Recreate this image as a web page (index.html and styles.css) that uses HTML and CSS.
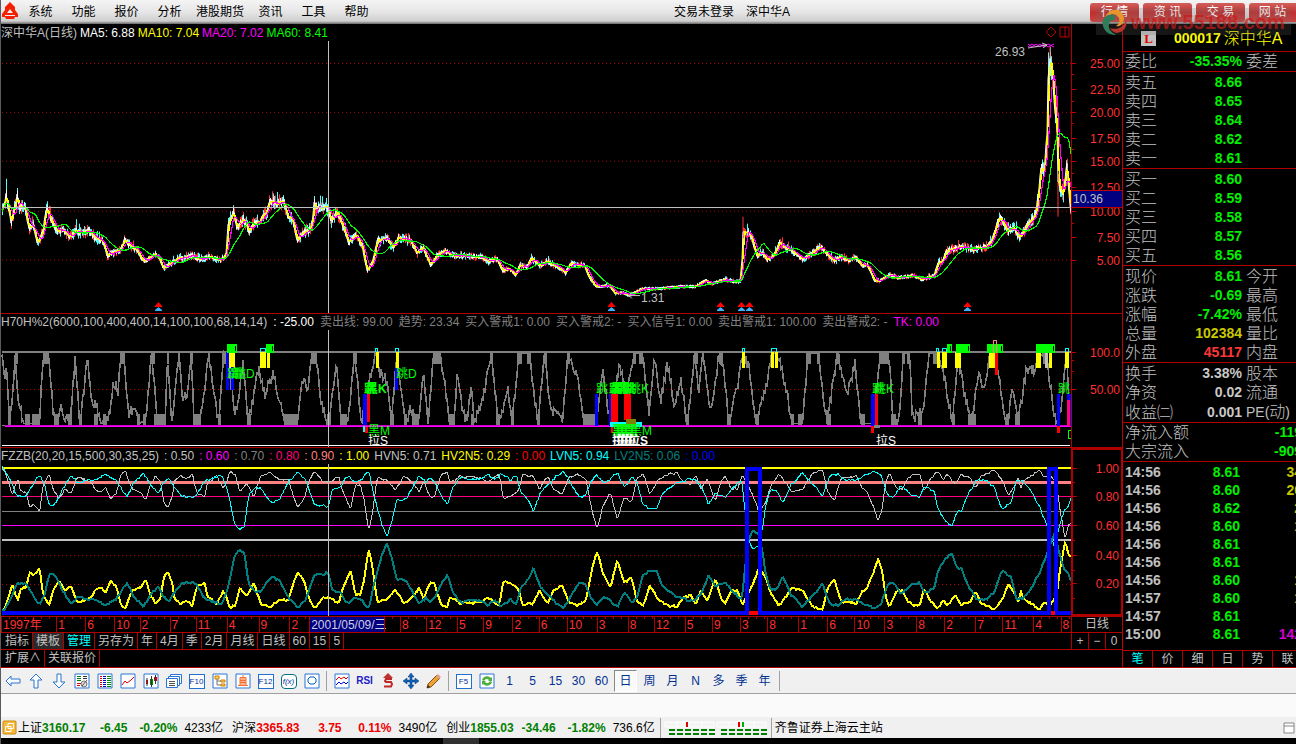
FILE: index.html
```html
<!DOCTYPE html>
<html lang="zh-CN">
<head>
<meta charset="utf-8">
<title>深中华A 000017 日线</title>
<link rel="stylesheet" href="styles.css">
</head>
<body>
<header class="menubar">
  <svg class="logo" viewBox="0 0 18 18"><path fill="#f52000" d="M9 0 14 5 14 8 17 12V15H14L13 17H5L4 15H1V12L4 8 4 5Z"/><path fill="#eee" d="M9 7 12 11H6ZM4 13H14V14H4Z"/></svg>
  <nav class="menu">
    <button>系统</button><button>功能</button><button>报价</button><button>分析</button><button>港股期货</button><button>资讯</button><button>工具</button><button>帮助</button>
  </nav>
  <div class="session"><span>交易未登录</span><span>深中华A</span></div>
  <nav class="links"><button>行 情</button><button>资 讯</button><button>交 易</button><button>网 站</button></nav>
  <div class="watermark">
    <svg viewBox="0 0 26 28"><path d="M4 10C7 0 21-2 23 10 23 17 18 19 15 18 19 16 20 9 15 7 11 5 7 6 4 10Z" fill="#e8962a"/><path d="M14 7C6 5 0 11 2 18 4 25 10 27 15 27 10 24 7 21 8 16 9 12 12 12 14 12Z" fill="#2f7d5b"/><path d="M9 20C14 22 22 21 25 12 27 20 21 25 15 25 12 24 10 22 9 20Z" fill="#b8352b"/></svg>
    <span>www.55188.com</span>
  </div>
</header>

<main class="workspace">
  <section class="charts">
    <div class="pane pane-price">
      <div class="plotcol">
        <div class="legend"><span class="silver">深中华A(日线)</span><span class="white">MA5: 6.88</span><span class="yellow">MA10: 7.04</span><span class="magenta">MA20: 7.02</span><span class="lime">MA60: 8.41</span>
          <svg class="corner" viewBox="0 0 26 14"><path d="M6 2 11 7 6 12 1 7ZM15 2H24V12H15ZM20 2V12" fill="none" stroke="#c00000"/></svg>
        </div>
        <div class="plot"><svg id="price" viewBox="1 41 1070 272" preserveAspectRatio="none"></svg></div>
      </div>
      <div class="axis" id="axis-price"></div>
    </div>
    <div class="pane pane-osc">
      <div class="plotcol">
        <div class="legend"><span class="silver">H70H%2(6000,100,400,400,14,100,100,68,14,14)</span><span class="white">: -25.00</span><span class="gray">卖出线: 99.00</span><span class="gray">趋势: 23.34</span><span class="gray">买入警戒1: 0.00</span><span class="gray">买入警戒2: -</span><span class="gray">买入信号1: 0.00</span><span class="gray">卖出警戒1: 100.00</span><span class="gray">卖出警戒2: -</span><span class="magenta">TK: 0.00</span></div>
        <div class="plot"><svg id="osc" viewBox="1 330 1070 117" preserveAspectRatio="none"></svg></div>
      </div>
      <div class="axis" id="axis-osc"></div>
    </div>
    <div class="pane pane-ratio">
      <div class="plotcol">
        <div class="legend"><span class="silver">FZZB(20,20,15,500,30,35,25)</span><span class="silver">: 0.50</span><span class="magenta">: 0.60</span><span class="gray">: 0.70</span><span class="rose">: 0.80</span><span class="salmon">: 0.90</span><span class="yellow">: 1.00</span><span class="silver">HVN5: 0.71</span><span class="yellow">HV2N5: 0.29</span><span class="red">: 0.00</span><span class="cyan">LVN5: 0.94</span><span class="teal">LV2N5: 0.06</span><span class="blue">: 0.00</span></div>
        <div class="plot"><svg id="ratio" viewBox="1 464 1070 152" preserveAspectRatio="none"></svg></div>
      </div>
      <div class="axis boxed" id="axis-ratio"></div>
    </div>
    <div class="dates"><div class="dateline" id="dates"></div><span class="period">日线</span></div>
    <nav class="tabs">
      <button>指标</button><button class="on">模板</button><button class="cyan">管理</button><button>另存为</button><button>年</button><button>4月</button><button>季</button><button>2月</button><button>月线</button><button>日线</button><button>60</button><button>15</button><button>5</button>
      <div class="zoomers"><button>+</button><button>−</button><button>0</button></div>
    </nav>
    <nav class="tabs"><button>扩展∧</button><button>关联报价</button></nav>
  </section>

  <aside class="quote">
    <h1><b class="flag">L</b><b>000017</b><span>深中华A</span></h1>
    <table><tr><th>委比</th><td class="up">-35.35%</td><th>委差</th></tr></table>
    <table class="book"><tr><th>卖五</th><td>8.66</td><th></th></tr><tr><th>卖四</th><td>8.65</td></tr><tr><th>卖三</th><td>8.64</td></tr><tr><th>卖二</th><td>8.62</td></tr><tr><th>卖一</th><td>8.61</td></tr></table>
    <table class="book"><tr><th>买一</th><td>8.60</td><th></th></tr><tr><th>买二</th><td>8.59</td></tr><tr><th>买三</th><td>8.58</td></tr><tr><th>买四</th><td>8.57</td></tr><tr><th>买五</th><td>8.56</td></tr></table>
    <table class="book"><tr><th>现价</th><td>8.61</td><th>今开</th></tr><tr><th>涨跌</th><td>-0.69</td><th>最高</th></tr><tr><th>涨幅</th><td>-7.42%</td><th>最低</th></tr><tr><th>总量</th><td class="olive">102384</td><th>量比</th></tr><tr><th>外盘</th><td class="hot">45117</td><th>内盘</th></tr></table>
    <table class="book"><tr><th>换手</th><td class="plain">3.38%</td><th>股本</th></tr><tr><th>净资</th><td class="plain">0.02</td><th>流通</th></tr><tr><th>收益㈡</th><td class="plain">0.001</td><th><b>PE(</b>动<b>)</b></th></tr></table>
    <table class="flow"><tr><th>净流入额</th><td>-119</td></tr><tr><th>大宗流入</th><td>-909</td></tr></table>
    <table class="ticks">
      <tr><th>14:56</th><td>8.61</td><td class="olive">34</td></tr><tr><th>14:56</th><td>8.60</td><td class="olive">20</td></tr><tr><th>14:56</th><td>8.62</td><td class="olive">2</td></tr><tr><th>14:56</th><td>8.60</td><td class="olive">1</td></tr><tr><th>14:56</th><td>8.61</td><td></td></tr><tr><th>14:56</th><td>8.61</td><td></td></tr><tr><th>14:56</th><td>8.60</td><td class="olive">1</td></tr><tr><th>14:57</th><td>8.60</td><td class="olive">1</td></tr><tr><th>14:57</th><td>8.61</td><td></td></tr><tr><th>15:00</th><td>8.61</td><td class="purple">142</td></tr>
    </table>
    <nav class="subtabs"><button class="cyan">笔</button><button>价</button><button>细</button><button>日</button><button>势</button><button>联</button></nav>
  </aside>
</main>

<nav class="toolbar">
  <button aria-label="后退"><svg viewBox="0 0 16 16"><path d="M1 8 6 3V6H15V10H6V13Z" class="outline"/></svg></button>
  <button aria-label="上"><svg viewBox="0 0 16 16"><path d="M8 1 14 7H10V15H6V7H2Z" class="outline"/></svg></button>
  <button aria-label="下"><svg viewBox="0 0 16 16"><path d="M8 15 14 9H10V1H6V9H2Z" class="outline"/></svg></button>
  <button aria-label="报告"><svg viewBox="0 0 16 16"><path d="M1 1H15V15H1Z" class="frame"/><path d="M3 3.5H7M3 5.5H7M3 7.5H7" stroke="#008000"/><path d="M3 10.5H7M3 12.5H6" stroke="#d00"/><path d="M9 3.5H13M9 5.5H13" stroke="#333"/><circle cx="10" cy="11" r="3" fill="#ddd" stroke="#777"/><path d="M8 13 13 7" stroke="#555"/></svg></button>
  <button aria-label="列表"><svg viewBox="0 0 16 16"><path d="M1 1H15V15H1Z" class="frame"/><path d="M3 3.5H5M3 5.5H5M3 7.5H5M3 9.5H5M3 11.5H5M3 13.5H5" stroke="#d00"/><path d="M6 3.5H9M6 5.5H9M6 7.5H9M6 9.5H9M6 11.5H9M6 13.5H9" stroke="#00c"/><path d="M10 3.5H14M10 5.5H14M10 7.5H14M10 9.5H14M10 11.5H14M10 13.5H14" stroke="#080"/></svg></button>
  <button aria-label="走势"><svg viewBox="0 0 16 16"><path d="M1 1H15V15H1Z" class="frame"/><path d="M2 12 5 8 7 10 11 7 14 4" fill="none" stroke="#e00000"/></svg></button>
  <button aria-label="K线"><svg viewBox="0 0 16 16"><path d="M1 1H15V15H1Z" class="frame"/><path d="M3 7H5V11H3Z" fill="#d00"/><path d="M7 6H10V12H7Z" fill="#080"/><path d="M11 4H14V8H11Z" fill="#d00"/><path d="M4 5V13M8.5 3V14M12.5 2V11" stroke="#333"/></svg></button>
  <button aria-label="窗口"><svg viewBox="0 0 16 16"><path d="M4.5 1.5H15.5V10.5H4.5Z" class="frame"/><path d="M2.5 3.5H13.5V12.5H2.5Z" class="frame"/><path d="M.5 5.5H11.5V14.5H.5Z" class="frame"/><path d="M3 8.5H9M3 10.5H9M3 12.5H9" stroke="#555"/></svg></button>
  <button class="key"><span>F10</span></button>
  <button aria-label="树"><svg viewBox="0 0 16 16"><path d="M1 1H15V15H1Z" class="frame"/><path d="M3 3H7V6H3ZM9 7H13V9H9ZM9 11H13V13H9Z" fill="#ffd45a" stroke="#d08000"/><path d="M5 6V12H9M5 8H9" fill="none" stroke="#777"/></svg></button>
  <button aria-label="自选"><svg viewBox="0 0 16 16"><path d="M1 1H15V15H1Z" class="frame"/><path d="M5 4.5H11V12.5H5ZM8 2V5M5 7.5H11M5 9.5H11M3 12.5H13" fill="#ffb088" stroke="#f07038"/></svg></button>
  <button class="key"><span>F12</span></button>
  <button class="key fx"><span>f(x)</span></button>
  <button aria-label="圈"><svg viewBox="0 0 16 16"><path d="M1 1H15V15H1Z" class="frame"/><path d="M6 4H10L12 6V9L10 11H6L4 9V6Z" fill="none" stroke="#0060c0"/></svg></button>
  <i></i>
  <button aria-label="波动"><svg viewBox="0 0 16 16"><path d="M1 1H15V15H1Z" class="frame"/><path d="M2 7 5 4 7 6 10 4 12 6 14 4" fill="none" stroke="#d00"/><path d="M2 12 5 9 7 11 10 9 12 11 14 9" fill="none" stroke="#00d"/></svg></button>
  <button class="rsi">RSI</button>
  <button aria-label="资金"><svg viewBox="0 0 16 16"><path d="M8 0 13 5H3Z" fill="#c03030"/><path d="M12 6H6L5 8 6 9H11L12 11 11 13.5H4" fill="none" stroke="#c02828" stroke-width="2"/></svg></button>
  <button aria-label="移动"><svg viewBox="0 0 16 16"><path d="M8 0 11 4H9V7H12V5L16 8 12 11V9H9V12H11L8 16 5 12H7V9H4V11L0 8 4 5V7H7V4H5Z" fill="#1060b8" stroke="#003878" stroke-width=".5"/></svg></button>
  <button aria-label="画笔"><svg viewBox="0 0 16 16"><path d="M2 11 11 2 14 5 5 14 1 15Z" fill="#f0a030" stroke="#805020"/><path d="M10 3 12 1 15 4 13 6Z" fill="#e0a090"/><path d="M1 15 2 12 4 14Z" fill="#222"/></svg></button>
  <i></i>
  <button class="key"><span>F5</span></button>
  <button aria-label="刷新"><svg viewBox="0 0 16 16"><path d="M1 1H15V15H1Z" class="frame"/><path d="M3 7C4 3 9 2 12 5L13 4V8H9L10 7C8 5 6 6 5 8ZM13 9C12 13 7 14 4 11L3 12V8H7L6 9C8 11 10 10 11 8Z" fill="#50b040"/></svg></button>
  <button>1</button><button>5</button><button>15</button><button>30</button><button>60</button><button class="pressed">日</button><button>周</button><button>月</button><button>N</button><button>多</button><button>季</button><button>年</button>
  <i></i>
</nav>
<div class="message"></div>
<footer class="status">
  <svg class="app" viewBox="0 0 15 15"><rect x="1" y="1" width="13" height="13" rx="1" fill="#f7b83c" stroke="#c88a10"/><path d="M6 3.5H11.5V8.5H6ZM3.5 6.5H9V11.5H3.5Z" fill="none" stroke="#fff"/></svg>
  <div class="indices">
    <div class="index down"><span>上证</span><b>3160.17</b><b>-6.45</b><b>-0.20%</b><span>4233亿</span></div>
    <div class="index rise"><span>沪深</span><b>3365.83</b><b>3.75</b><b>0.11%</b><span>3490亿</span></div>
    <div class="index down"><span>创业</span><b>1855.03</b><b>-34.46</b><b>-1.82%</b><span>736.6亿</span></div>
  </div>
  <i></i>
  <svg class="meter" viewBox="0 0 104 16"><path d="M1 2H50V7H1ZM13 2V7M25 2V7M38 2V7M53 2H102V7H53ZM65 2V7M78 2V7M90 2V7" fill="#f4f4f4" stroke="#fff"/><path d="M23 2V7M75 2V7" stroke="#e00000" stroke-width="2"/><path d="M79 2V7" stroke="#00b000" stroke-width="2"/><path d="M5 10H51M57 10H103M5 14H51M57 14H103" stroke="#008000" stroke-width="2" stroke-dasharray="6 2"/></svg>
  <i></i>
  <span class="host">齐鲁证券上海云主站</span>
  <svg class="tray" viewBox="0 0 12 12"><path d="M1 1H11V11H1ZM1 4H11" fill="#fff" stroke="#888"/></svg>
</footer>
<div class="desktop"><span></span></div>
<script src="chart.js"></script>
</body>
</html>
```
FILE: styles.css
```css
* { box-sizing: border-box; }
body {
  margin: 0; min-height: 100vh; display: flex; flex-direction: column;
  background: #000; color: #c0c0c0; border-left: 1px solid #585c60; overflow-x: hidden;
  font: 12px/16px "Liberation Sans", "Noto Sans CJK SC", sans-serif;
}
button { font: inherit; color: inherit; background: none; border: 0; padding: 0; margin: 0; white-space: nowrap; }
.silver { color: #c0c0c0; } .white { color: #fff; } .yellow { color: #ff0; } .magenta { color: #f0f; }
.lime { color: #0f0; } .gray { color: #808080; } .rose { color: #ff0080; } .salmon { color: #ff8080; }
.red { color: #f00; } .cyan { color: #0ff; } .teal { color: #008080; } .blue { color: #00f; }

.menubar {
  position: relative; display: flex; align-items: center; height: 24px; flex: none; color: #000;
  background: linear-gradient(#f4f4f4, #e6e6e6 50%, #cfcfcf 88%, #bbb 90%, #666);
}
.logo { width: 18px; height: 18px; flex: none; margin-bottom: 2px; }
.menu { display: flex; }
.menu button { min-width: 43px; padding: 0 5px; }
.session { flex: 1; display: flex; justify-content: center; gap: 12px; padding-right: 4px; }
.links { display: flex; gap: 4px; }
.links button {
  width: 49px; height: 19px; border-radius: 3px; color: #fff; font-size: 12px;
  background: linear-gradient(#d0605c, #c03030 50%, #c84440);
}
.links button:last-child { width: 47px; border-radius: 3px 0 0 3px; }
.watermark {
  position: absolute; right: 5px; top: 8px; width: 195px; height: 27px; display: flex; align-items: center;
  padding-left: 5px; gap: 4px; background: rgba(110,110,110,.2); pointer-events: none;
}
.watermark svg { width: 26px; height: 28px; }
.watermark span { color: rgba(200,25,25,.7); font-weight: bold; font-size: 20px; line-height: 24px; }

.workspace { flex: 1; display: flex; min-height: 0; }
.charts { flex: 1; min-width: 0; display: flex; flex-direction: column; border-right: 1px solid #c00000; }
.pane { display: flex; min-height: 0; border-bottom: 1px solid #b00000; }
.pane-price { flex: 290 1 0; } .pane-osc { flex: 134 1 0; } .pane-ratio { flex: 169 1 0; }
.plotcol { flex: 1; min-width: 0; display: flex; flex-direction: column; }
.legend { display: flex; gap: 3px; height: 17px; padding-top: 1px; white-space: nowrap; overflow: hidden; flex: none; }
.pane-osc .legend, .pane-ratio .legend { height: 16px; padding-top: 0; }
.pane-osc .legend { gap: 6px; }
.pane-ratio .legend { gap: 5px; }
.corner { width: 26px; height: 14px; margin-left: auto; }
.plot { position: relative; flex: 1; min-height: 0; overflow: hidden; }
.plot > svg { position: absolute; width: 100%; height: 100%; shape-rendering: crispEdges; }
.note { position: absolute; line-height: 12px; white-space: nowrap; }
.note.heavy { font-weight: bold; }
.axis { position: relative; width: 51px; flex: none; border-left: 1px solid #b00000; color: #ff3030; overflow: hidden; }
.axis.boxed { border: 2px solid #b00000; border-right-width: 1px; }
.axis span { position: absolute; right: 2px; transform: translateY(-50%); }
.axis u { position: absolute; left: 0; width: 4px; height: 1px; background: #c00000; }
.axis u.minor { width: 2px; }
.axis .cursor { left: 0; right: 0; background: #000080; color: #c0c0c0; border: solid #c00000; border-width: 1px 0; padding-left: 1px; }

.dates { display: flex; height: 16px; border-bottom: 1px solid #b00000; flex: none; }
.dateline { flex: 1; display: flex; min-width: 0; color: #ff3030; overflow: hidden; }
.dateline span {
  flex-basis: 0; min-width: 0; white-space: nowrap; border-left: 1px solid #b00000; padding-left: 1px; line-height: 16px;
  background: repeating-linear-gradient(90deg, transparent 0 7px, #b00000 7px 8px) 0 0 / 100% 2px no-repeat;
}
.dateline span.sel { background: #000080; color: #d0d0e0; }
.period { width: 51px; text-align: center; border-left: 1px solid #b00000; line-height: 15px; }
.tabs { display: flex; height: 17px; border-bottom: 1px solid #b00000; padding-left: 1px; flex: none; }
.tabs + .tabs { height: 18px; }
.tabs button { padding: 0 3px; border-right: 1px solid #b00000; line-height: 15px; min-width: 14px; }
.tabs button.on { background: #2a2a2a; }
.zoomers { display: flex; margin-left: auto; border-left: 1px solid #b00000; width: 51px; }
.zoomers button { flex: 1; }
.zoomers button:last-child { border: 0; }

.quote { width: 173px; flex: none; overflow: hidden; display: flex; flex-direction: column; font-size: 16px; line-height: 19px; }
.quote h1 { display: flex; align-items: center; margin: 0; height: 28px; flex: none; padding: 2px 0 0 18px; border-bottom: 1px solid #b00000; font-size: 14px; color: #ff0; }
.quote h1 span { font-size: 16px; font-weight: 300; margin-left: 3px; }
.quote h1 .flag { background: #c0c0c0; color: #e00000; width: 15px; height: 15px; margin-right: 18px; font: bold 13px/15px "Liberation Serif", serif; text-align: center; }
.quote table { width: 179px; flex: none; table-layout: fixed; border-spacing: 0; border-bottom: 1px solid #b00000; padding: 0; }
.quote tr { height: 19px; }
.quote th, .quote td { padding: 0; height: 19px; white-space: nowrap; overflow: visible; line-height: 19px; }
.quote th { text-align: left; padding-left: 2px; width: 60px; font-weight: 300; }
.quote th b { font-size: 14px; }
.quote td { width: 59px; text-align: right; font-size: 14px; font-weight: bold; color: #00f000; }
.quote td + th { padding-left: 4px; }
.quote .book { padding-top: 1px; }
.quote .flow td { width: 119px; }
.quote td.olive { color: #c8c800; } .quote td.hot { color: #ff3838; } .quote td.plain { color: #c8c8c8; } .quote td.purple { color: #d000d0; }
.quote .ticks { flex: 1; padding-top: 1px; padding-bottom: 7px; }
.quote .ticks tr, .quote .ticks th, .quote .ticks td { height: 18px; line-height: 18px; font-size: 14px; }
.quote .ticks th { font-weight: bold; }
.quote .ticks td { width: 57px; }
.quote .ticks td:last-child { width: 62px; }
.subtabs { display: flex; height: 17px; flex: none; border-bottom: 1px solid #b00000; width: 180px; font-size: 12px; line-height: 15px; }
.subtabs button { flex: 1; border-right: 1px solid #b00000; }

.toolbar { display: flex; align-items: center; height: 26px; flex: none; background: #f0f0f0; border-top: 1px solid #fff; border-bottom: 1px solid #a0a0a0; color: #003090; }
.toolbar button { width: 23px; height: 22px; display: flex; align-items: center; justify-content: center; }
.toolbar svg { width: 16px; height: 16px; }
.toolbar i, .status i { width: 1px; height: 20px; background: #a0a0a0; margin: 0 3px; flex: none; }
.outline { fill: #f8fbff; stroke: #2a74d0; }
.frame { fill: #fff; stroke: #2a74d8; }
.key span { width: 16px; height: 15px; border: 1px solid #2070d0; background: #fff; font-size: 8px; line-height: 14px; color: #0030a0; text-align: center; }
.key.fx span { border-color: #007080; border-radius: 4px; font-style: italic; }
.rsi { font-weight: bold; font-size: 10px; color: #2020c8; }
.toolbar .pressed { border: 1px solid #888; border-color: #888 #fff #fff #888; background: #fafafa; margin: 0 1px; }
.message { height: 23px; flex: none; background: #fafafa; }
.status { height: 21px; flex: none; display: flex; align-items: center; background: #f0f0f0; color: #000; white-space: nowrap; }
.app { width: 15px; height: 15px; margin: 0 1px; }
.indices { display: flex; gap: 9px; margin-right: 2px; }
.index { display: flex; }
.index b { text-align: right; min-width: 42px; }
.index b:last-of-type { min-width: 50px; margin-right: 7px; }
.index.down b { color: #008000; } .index.rise b { color: #f00000; }
.meter { width: 104px; height: 16px; }
.tray { width: 12px; height: 12px; margin-left: auto; margin-right: 1px; }
.desktop { height: 6px; flex: none; padding-left: 442px; }
.desktop span { display: block; width: 36px; height: 6px; background: #303030; }
```
FILE: chart.js
```js
const NS = 'http://www.w3.org/2000/svg';
let seed = 17;
const rnd = () => (seed = (seed * 16807) % 2147483647) / 2147483647;

function el(svg, tag, attrs) {
  const e = document.createElementNS(NS, tag);
  for (const k in attrs) e.setAttribute(k, attrs[k]);
  svg.appendChild(e);
  return e;
}
const path = (svg, d, stroke, width = 1, extra = {}) => el(svg, 'path', { d, stroke, 'stroke-width': width, fill: 'none', ...extra });
const rect = (svg, x, y, w, h, fill) => el(svg, 'rect', { x, y, width: w, height: h, fill });
const hline = (svg, y, color, width = 1) => rect(svg, 2, y, 1069, width, color);
const dotted = (svg, y) => path(svg, `M2 ${y + 0.5}H1071`, '#b00000', 1, { 'stroke-dasharray': '1 3' });
const toPath = pts => 'M' + pts.map(p => p[0] + ' ' + p[1].toFixed(1)).join('L');
const pairs = s => s.trim().split(/\s+/).map(p => p.split(',').map(Number));

/* Sample a polyline at every pixel column. */
function sample(pts) {
  const out = [];
  let i = 0;
  for (let x = 2; x <= 1071; x++) {
    while (i < pts.length - 2 && pts[i + 1][0] < x) i++;
    const [x0, y0] = pts[i], [x1, y1] = pts[i + 1];
    const t = Math.min(1, Math.max(0, (x - x0) / (x1 - x0 || 1)));
    out.push([x, y0 + (y1 - y0) * t]);
  }
  return out;
}
function average(pts, n) {
  return pts.map(([x], i) => {
    const a = Math.max(0, i - n + 1);
    let s = 0;
    for (let k = a; k <= i; k++) s += pts[k][1];
    return [x, s / (i - a + 1)];
  });
}
function note(svg, text, x, y, color, heavy) {
  const [vx, vy, vw, vh] = svg.getAttribute('viewBox').split(' ').map(Number);
  const s = document.createElement('span');
  s.className = 'note' + (heavy ? ' heavy' : '');
  s.textContent = text;
  s.style.cssText = `left:${(x - vx) / vw * 100}%;top:${(y - vy) / vh * 100}%;color:${color}`;
  svg.parentNode.appendChild(s);
}

/* Price pane */
const price = document.getElementById('price');
[63, 112, 161, 211, 260].forEach(y => dotted(price, y));
const close = sample(pairs(`2,212 6,196 11,222 17,197 19,208 25,208 29,230 33,224 37,243 43,232 45,215 47,210 53,226 58,232 63,230
70,238 76,230 82,234 88,230 97,240 103,242 107,256 115,252 120,251 124,241 132,248 137,250 143,262 155,255 159,258 163,269 173,262
180,258 192,256 200,260 210,257 220,261 226,255 228,225 233,213 237,228 243,218 249,231 255,224 260,222 267,210 269,202 277,204 283,202 288,217
293,222 297,240 302,233 309,230 312,222 314,203 318,208 328,207 331,222 337,212 340,220 344,230 348,242 356,235 362,247 367,271 372,263
377,242 385,237 393,248 398,238 410,241 417,253 423,248 430,265 435,258 444,251 454,257 467,256 482,258 488,262 497,259 502,271 509,269
515,276 520,265 526,268 531,258 539,266 547,262 557,267 565,273 570,264 584,266 589,278 596,287 609,286 615,294 622,293 629,296
642,289 659,289 679,287 695,287 705,281 712,284 724,280 732,282 740,282 742,260 743,232 747,231 752,240 757,257 761,252 767,260
774,255 779,243 789,250 802,259 812,253 820,247 827,255 834,261 840,257 847,261 855,258 862,266 867,265 874,281 880,281 889,275
897,278 914,276 921,280 934,276 938,262 942,263 946,252 954,249 961,247 974,250 986,247 992,240 996,227 999,217 1007,232 1014,228
1019,238 1024,230 1031,220 1036,213 1039,187 1041,167 1044,173 1047,133 1048,83 1050,62 1052,73 1054,100 1057,133 1058,180 1063,197
1067,163 1069,197 1071,215`));
const jag = close.map(([x, y]) => [x, y + (rnd() - 0.5) * (300 - y) * 0.05]);
let cyanBars = '', redBars = '', whiteBars = '';
jag.forEach(([x, y]) => {
  const v = Math.max(1, (300 - y) * 0.07);
  const hi = y - 1 - rnd() * v * (rnd() > 0.85 ? 1.9 : 1.1), lo = y + 1 + rnd() * v * 1.1;
  const d = `M${x + 0.5} ${hi.toFixed(1)}V${lo.toFixed(1)}`;
  if (rnd() > 0.55) redBars += d; else cyanBars += d;
  if (rnd() > 0.4) whiteBars += `M${x + 0.5} ${(y - v / 3 - 1).toFixed(1)}V${(y + v / 3 + 1).toFixed(1)}`;
});
path(price, redBars, '#ff3232');
path(price, cyanBars, '#54fcfc');
path(price, whiteBars, '#fff');
path(price, 'M743 217V260M1050 46V80M1058 180V217', '#ff3232');
path(price, toPath(jag), '#fff');
path(price, toPath(average(jag, 3)), '#ff0', 1.6);
path(price, toPath(average(jag, 7)), '#f0f', 1.2);
path(price, toPath(average(close, 22)), '#0f0', 1.2);
path(price, 'M1028 44L1032 47L1036 44L1040 47L1044 44L1048 47L1054 44M1028 47L1032 44L1036 47L1040 44L1044 47L1048 44L1054 47', '#f0f');
path(price, 'M1028 48L1047 45M1042 43L1047 45L1043 48M629 296H640M632 293L629 296L632 299', '#c0c0c0');
[158, 611, 720, 741, 749, 967].forEach(x => {
  path(price, `M${x - 3} 307L${x + 0.5} 303L${x + 4} 307Z`, '#f00', 1, { fill: '#f00' });
  path(price, `M${x - 3} 311L${x + 0.5} 308L${x + 4} 311Z`, '#40b0ff', 1, { fill: '#40b0ff' });
});
hline(price, 207, '#c0c0c0');
note(price, '26.93', 995, 46, '#c0c0c0');
note(price, '1.31', 641, 292, '#c0c0c0');

/* Oscillator pane: coordinates in thirds of a pixel */
const osc = document.getElementById('osc');
dotted(osc, 389);
hline(osc, 351, '#808080', 2);
const wave = pairs(`7,150 14,200 20,190 28,340 38,240 46,130 54,260 62,300 72,340 118,340 130,130 146,130 158,290 168,340 185,290 196,320
210,340 225,150 240,340 262,150 275,290 290,280 298,320 318,340 335,270 340,210 355,240 364,130 374,160 386,320 398,290 415,340 438,330
455,130 470,320 496,340 503,130 515,340 526,250 537,130 548,270 560,250 574,130 582,340 600,340 627,130 640,250 657,340 672,130 686,160
705,325 730,160 745,340 775,180 795,250 820,180 850,330 890,340 912,190 925,240 934,130 946,130 965,280 985,340 1010,150 1024,340
1045,330 1063,130 1085,340 1125,130 1145,200 1160,210 1175,340 1190,130 1215,340 1232,295 1255,340 1270,180 1285,340
1301,130 1318,130 1334,220 1348,340 1361,340 1371,200 1396,340 1416,230 1421,340 1446,280 1474,130 1496,340 1524,240 1536,340 1558,130
1586,130 1614,340 1634,130 1651,290 1688,330 1704,130 1731,190 1754,340 1786,340 1808,190 1831,340 1859,150 1876,260 1901,130 1926,130
1948,310 1964,150 1981,280 2001,160 2026,290 2041,200 2062,340 2084,130 2096,240 2108,120 2131,310 2158,130 2171,180 2186,340 2216,210
2229,130 2251,190 2268,340 2296,250 2314,130 2330,130 2356,220 2376,340 2408,340 2424,130 2456,130 2481,340 2512,130 2541,250 2566,160
2581,340 2602,340 2617,340 2642,130 2666,130 2680,340 2697,320 2710,130 2728,130 2737,320 2752,320 2770,300 2787,130 2807,130 2827,170
2857,340 2874,130 2892,250 2917,340 2937,170 2954,250 2970,130 2987,130 3012,310 3024,340 3037,230 3054,340 3077,190 3107,170 3117,130
3142,150 3162,320 3177,340 3200,130 3210,340`).map(([x, y]) => [x / 3, y / 3 + 310]);
const zig = sample(wave).map(([x, y]) => {
  const n = y < 356 || y > 420 ? 0 : (rnd() - 0.5) * 13;
  return [x, Math.min(424, Math.max(353, y + n))];
});
path(osc, toPath(zig), '#808080', 1.6);
[[15, 3], [43, 6], [120, 5], [151, 4], [167, 2], [190, 3], [222, 4], [311, 5], [353, 4], [433, 8], [490, 3], [517, 5], [527, 4],
 [544, 3], [567, 3], [633, 3], [639, 4], [694, 4], [719, 4], [806, 5], [817, 3], [836, 3], [879, 10], [902, 3], [907, 3], [933, 4]]
  .forEach(([x, w]) => rect(osc, x, 352, w, 12, '#808080'));
[[8, 3], [25, 5], [32, 8], [54, 4], [68, 4], [79, 3], [94, 4], [103, 3], [137, 3], [143, 3], [154, 12], [193, 8], [218, 3], [247, 4],
 [284, 14], [327, 4], [340, 7], [390, 4], [404, 3], [412, 6], [449, 6], [471, 3], [496, 4], [511, 3], [537, 3], [584, 11], [686, 3],
 [727, 4], [756, 3], [791, 3], [798, 4], [827, 4], [861, 4], [891, 5], [918, 4], [952, 3], [968, 8], [1006, 3], [1015, 5]]
  .forEach(([x, w]) => rect(osc, x, 414, w, 12, '#808080'));
hline(osc, 425, '#808080', 1);
rect(osc, 5, 426, 1066, 1, '#f0f');
rect(osc, 5, 425, 1066, 1, '#c800c8');
[[228, 7], [260, 6], [267, 3], [376, 3], [396, 3], [742, 3], [771, 3], [775, 3], [937, 3], [942, 5], [955, 6], [989, 8], [1036, 5],
 [1049, 3], [1065, 4]].forEach(([x, w]) => rect(osc, x, 352, w, 16, '#ff0'));
[[226, 352, 3, 38], [231, 367, 3, 23], [395, 368, 3, 22], [363, 394, 4, 31], [595, 394, 3, 32], [609, 394, 2, 32], [871, 394, 4, 32],
 [1057, 394, 3, 32], [1067, 394, 4, 32]].forEach(([x, y, w, h]) => rect(osc, x, y, w, h, '#00f'));
[[367, 394, 3, 28], [365, 427, 3, 6], [611, 394, 7, 29], [624, 394, 7, 26], [611, 427, 2, 6], [875, 394, 3, 31], [871, 426, 3, 7],
 [1057, 426, 3, 7], [995, 352, 3, 23]].forEach(([x, y, w, h]) => rect(osc, x, y, w, h, '#f00'));
rect(osc, 1067, 400, 3, 26, '#ff0080');
rect(osc, 1045, 352, 3, 16, '#c0c0c0');
[[227, 10], [266, 8], [947, 5], [956, 14], [987, 16], [1036, 19]].forEach(([x, w]) => {
  rect(osc, x, 344, w, 9, '#0f0');
  rect(osc, x + w - 2, 346, 1, 5, '#000');
});
[[260, 6], [375, 3], [395, 4], [742, 3], [771, 6], [936, 3], [942, 5], [1065, 4]]
  .forEach(([x, w]) => path(osc, `M${x + 0.5} 351.5V348.5H${x + w - 0.5}V351.5`, '#0ff'));
path(osc, 'M993.5 353V340.5H996.5V353', '#ff8080');
path(osc, 'M1071 430.5H1068.5V438.5H1071', '#0f0');
rect(osc, 610, 422, 16, 5, '#0ff');
rect(osc, 636, 422, 6, 5, '#0ff');
rect(osc, 626, 419, 10, 6, '#808000');
rect(osc, 363, 426, 2, 6, '#0ff');
rect(osc, 874, 425, 6, 3, '#808080');
rect(osc, 2, 445, 1068, 1, '#fff');
[[227, '跳'], [231, '跳'], [234, '跳D'], [396, '跳D']].forEach(([x, t]) => note(osc, t, x, 368, '#0f0'));
[[364, '跳', 1], [366, '黑K', 1], [596, '跳'], [609, '跳', 1], [611, '黑', 1], [615, '跳', 1], [619, '黑', 1], [624, '跳', 1], [629, '跳K'],
 [872, '跳'], [874, '跳K'], [1058, '跳']].forEach(([x, t, b]) => note(osc, t, x, 383, '#0f0', b));
[[368, '黑M'], [612, '黑', 1], [616, '黑', 1], [620, '黑', 1], [626, '黑', 1], [630, '黑M']].forEach(([x, t, b]) => note(osc, t, x, 425, '#0f0', b));
[[368, '拉S'], [612, '拉', 1], [616, '拉', 1], [620, '拉', 1], [624, '拉', 1], [628, '拉S', 1], [876, '拉S']].forEach(([x, t, b]) => note(osc, t, x, 435, '#fff', b));

/* Ratio pane: the lower curves are the upper ones mirrored about 0.50 */
const ratio = document.getElementById('ratio');
dotted(ratio, 555);
dotted(ratio, 584);
hline(ratio, 467, '#ff0', 2);
hline(ratio, 481, '#ff8080', 3);
hline(ratio, 496, '#ff0080');
hline(ratio, 511, '#808080');
hline(ratio, 525, '#f0f');
hline(ratio, 539, '#c0c0c0', 2);
const high = pairs(`7,70 20,95 35,150 52,100 60,135 78,145 88,188 100,175 117,198 128,120 145,85 158,130 175,160 195,130 212,148 230,95
250,105 270,108 290,140 302,145 315,125 330,160 348,145 362,88 375,80 388,120 400,135 420,140 435,165 450,120 465,92 480,110 490,170
500,188 515,160 522,110 540,92 555,102 575,88 590,145 612,155 620,115 650,92 668,130 690,82 705,88 718,140 740,115 760,155 780,95 805,80
820,90 835,105 862,100 878,150 892,188 912,155 925,110 943,80 965,110 985,112 1015,95 1030,150 1050,192 1065,120 1080,120 1090,160
1105,258 1115,210 1130,100 1160,105 1185,135 1210,95 1235,110 1255,140 1270,110 1290,158 1301,155 1321,90 1338,82 1351,115 1376,95
1406,95 1446,100 1461,115 1481,95 1496,90 1508,158 1531,155 1551,140 1566,90 1596,92 1616,130 1641,95 1661,135 1686,145 1706,95 1731,88
1756,100 1771,180 1789,250 1806,190 1829,140 1851,225 1871,155 1894,172 1908,105 1928,85 1948,148 1976,100 2006,88 2031,85 2041,105
2071,120 2086,90 2101,130 2111,115 2121,100 2131,130 2144,168 2158,120 2174,90 2191,130 2211,130 2226,90 2241,120 2261,160 2274,198
2296,170 2311,125 2336,85 2356,115 2376,140 2406,135 2436,85 2466,75 2481,140 2503,165 2521,100 2546,98 2566,90 2586,130 2602,145
2617,180 2632,225 2644,200 2654,120 2667,82 2687,125 2704,135 2722,100 2742,88 2757,88 2770,135 2792,100 2812,78 2827,105 2842,90
2864,120 2882,90 2907,95 2924,130 2942,95 2982,75 3007,110 3024,150 3042,125 3054,95 3060,130 3072,105 3117,75 3132,95 3147,85 3162,105
3170,130 3180,200 3194,282 3204,240 3212,235`);
const low = pairs(`7,68 30,105 50,155 78,155 95,120 118,90 132,120 148,182 165,178 180,145 212,92 235,115 260,105 285,105 315,88 345,105
380,155 400,110 430,85 450,120 475,145 490,110 505,100 520,125 545,155 585,155 610,110 640,100 665,90 680,130 703,238 710,248 730,252
745,150 760,130 780,130 812,172 835,165 865,110 890,82 915,105 942,180 985,185 992,140 1005,130 1020,125 1040,92 1070,112 1105,80
1125,170 1145,240 1160,272 1175,225 1187,168 1220,158 1240,120 1257,92 1275,110 1290,95 1301,110 1321,150 1341,178 1361,120 1381,95
1406,105 1446,100 1461,85 1481,105 1501,85 1531,105 1548,88 1561,145 1581,160 1599,200 1621,140 1646,115 1671,90 1691,80 1711,115
1736,155 1756,152 1771,110 1788,90 1811,115 1851,85 1871,125 1894,95 1911,115 1926,180 1946,190 1968,190 1986,145 2016,120 2076,100
2101,120 2124,178 2146,145 2176,155 2201,125 2224,105 2234,200 2241,280 2251,300 2261,315 2274,300 2286,250 2296,180 2311,135 2326,135
2348,172 2371,120 2404,85 2431,110 2466,150 2486,95 2511,88 2536,105 2566,108 2586,92 2597,90 2622,78 2642,90 2657,140 2677,160 2702,120
2732,150 2757,158 2770,125 2802,140 2812,190 2832,225 2854,245 2867,205 2884,195 2907,140 2932,102 2957,105 2982,130 3004,195 3032,170
3047,110 3067,105 3092,140 3117,185 3137,235 3152,280 3162,305 3177,240 3192,195 3204,185 3212,155`);
const scale = pts => average(sample(pts.map(([x, y]) => [x / 3, y / 3 + 445])).map(([x, y]) => [x, y + (rnd() - 0.5) * 3]), 2);
const mirror = pts => pts.map(([x, y]) => [x, Math.min(610, 1079.5 - y)]);
const hv = scale(high), lv = scale(low);
path(ratio, toPath(hv), '#c0c0c0', 1);
path(ratio, toPath(mirror(hv)), '#ff0', 2);
path(ratio, toPath(lv), '#0ff', 1);
path(ratio, toPath(mirror(lv)), '#008080', 2);
hline(ratio, 611, '#00f', 4);
path(ratio, 'M747 614V469H760V614M1049 614V469H1056V614', '#00f', 4);
rect(ratio, 749, 611, 9, 4, '#f00');
rect(ratio, 1051, 611, 4, 4, '#f00');

[price, osc, ratio].forEach(svg => rect(svg, 328, 41, 1, 580, '#c0c0c0'));

/* Value axes */
function axis(id, top, height, labels, minors) {
  const box = document.getElementById(id);
  const pos = y => `top:${(y - top) / height * 100}%`;
  const add = (tag, y, cls, text) => {
    const e = document.createElement(tag);
    if (cls) e.className = cls;
    if (text) e.textContent = text;
    e.style.cssText = pos(y);
    box.appendChild(e);
  };
  labels.forEach(([t, y]) => { add('u', y); add('span', y + 1, '', t); });
  minors.forEach(y => add('u', y, 'minor'));
  return add;
}
axis('axis-price', 24, 289, [['25.00', 63], ['22.50', 89], ['20.00', 112], ['17.50', 138], ['15.00', 161], ['12.50', 187], ['10.00', 211],
  ['7.50', 237], ['5.00', 260]], [74, 101, 123, 149, 173, 223])('span', 199, 'cursor', '10.36');
axis('axis-osc', 314, 133, [['100.0', 352], ['50.00', 389]], [360, 371]);
axis('axis-ratio', 449, 166, [['1.00', 467], ['0.80', 496], ['0.60', 525], ['0.40', 555], ['0.20', 584]], [482, 511, 540, 570, 599]);

/* Date axis: label and left edge of every cell */
const cells = [['1997年', 1], ['1', 58], ['6', 87], ['10', 116], ['2', 141], ['7', 171], ['11', 197], ['4', 228], ['9', 260], ['2', 291],
  ['2001/05/09/三', 310, 'sel'], ['', 388], ['8', 403], ['12', 429], ['5', 460], ['9', 486], ['2', 515], ['6', 541], ['10', 569], ['3', 599],
  ['8', 630], ['12', 656], ['5', 687], ['9', 714], ['3', 742], ['8', 769], ['1', 800], ['6', 829], ['10', 856], ['3', 886], ['8', 918],
  ['2', 946], ['7', 977], ['11', 1004], ['4', 1035], ['8', 1062], [null, 1071]];
cells.slice(0, -1).forEach(([t, x, cls], i) => {
  const s = document.createElement('span');
  s.textContent = t;
  if (cls) s.className = cls;
  s.style.flexGrow = cells[i + 1][1] - x;
  document.getElementById('dates').appendChild(s);
});
```
